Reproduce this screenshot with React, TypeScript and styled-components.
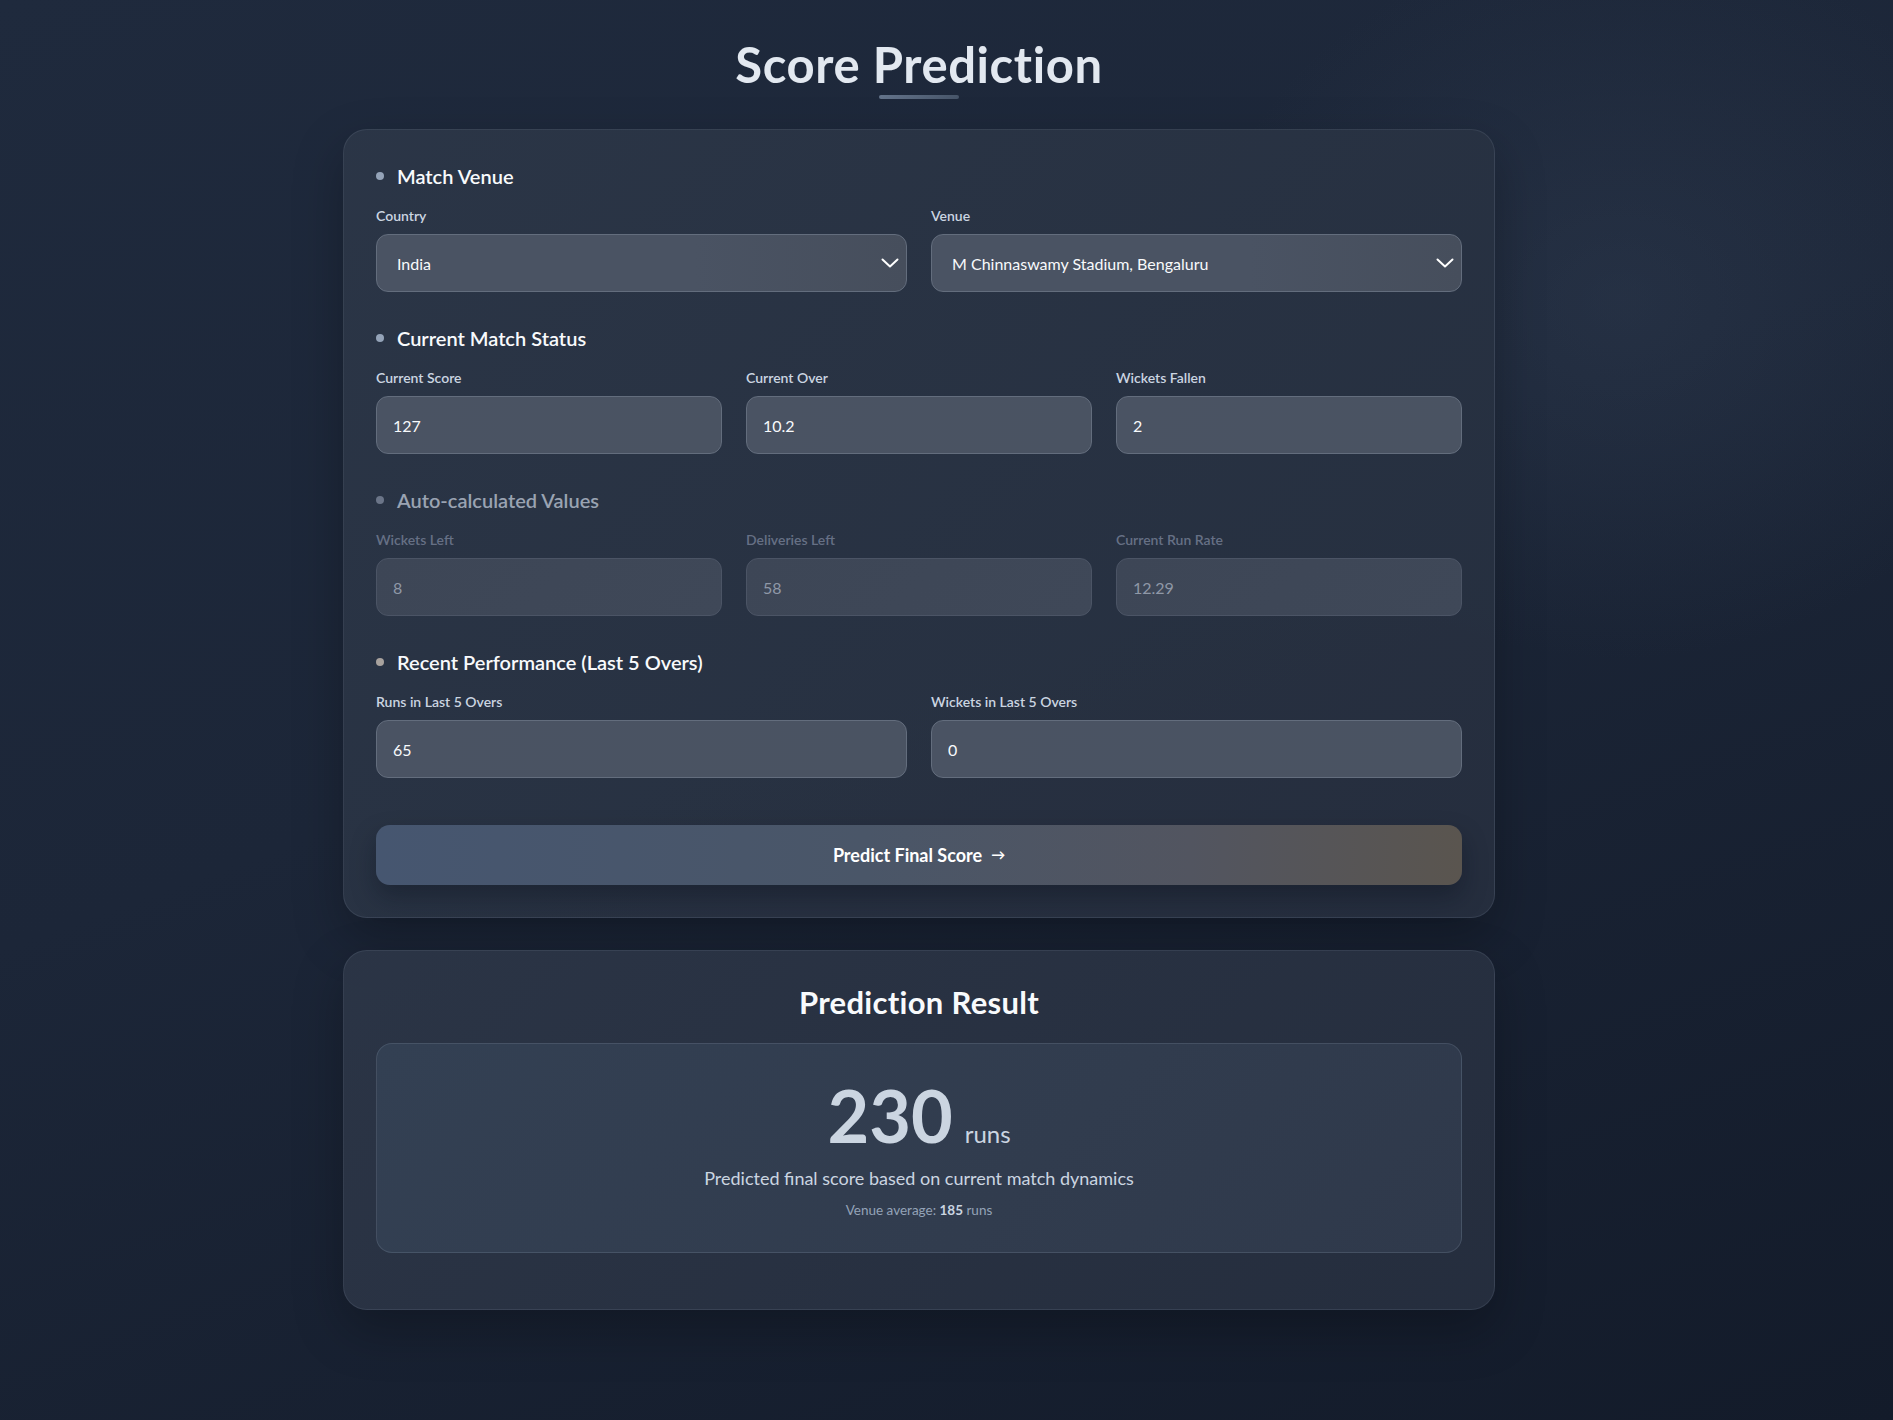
import React from "react";
import styled, { createGlobalStyle } from "styled-components";

const GlobalStyle = createGlobalStyle`
  html, body {
    margin: 0;
    padding: 0;
  }
  body {
    min-height: 1420px;
    font-family: Lato, "Open Sans", "Noto Sans", sans-serif;
    color: #f1f5f9;
    background:
      radial-gradient(ellipse 560px 480px at 1620px 300px, rgba(56, 70, 92, 0.32), rgba(56, 70, 92, 0) 75%),
      linear-gradient(160deg, #1f2a3d 0%, #1c2638 45%, #131b2a 100%);
  }
  * { box-sizing: border-box; }
`;

const Page = styled.main`
  min-height: 1420px;
  padding: 35px 55px 80px 0;
  display: flex;
  flex-direction: column;
  align-items: center;
`;

const PageTitle = styled.h1`
  margin: 0;
  font-size: 49px;
  line-height: 58px;
  font-weight: 700;
  color: #e2e8f0;
  letter-spacing: 0.6px;
`;

const TitleBar = styled.div`
  width: 80px;
  height: 4px;
  margin-top: 2px;
  border-radius: 2px;
  background: linear-gradient(90deg, #64748b, #475569);
`;

const Card = styled.section<{ $mt: number }>`
  width: 1152px;
  margin-top: ${(p) => p.$mt}px;
  padding: 32px;
  border-radius: 24px;
  border: 1px solid rgba(148, 163, 184, 0.14);
  background: linear-gradient(135deg, rgba(44, 54, 71, 0.95) 0%, rgba(38, 47, 63, 0.95) 100%);
  box-shadow: 0 20px 50px rgba(0, 0, 0, 0.25);
  display: flex;
  flex-direction: column;
`;

const Sections = styled.div`
  display: flex;
  flex-direction: column;
  gap: 32px;
`;

const SectionTitle = styled.h2<{ $muted?: boolean; $dot: string }>`
  margin: -1px 0 15px 0;
  display: flex;
  align-items: center;
  gap: 13px;
  font-size: 20px;
  line-height: 30px;
  font-weight: 600;
  color: ${(p) => (p.$muted ? "#9aa3b2" : "#f8fafc")};

  &::before {
    content: "";
    width: 8px;
    height: 8px;
    border-radius: 50%;
    background: ${(p) => p.$dot};
    flex: none;
  }
`;

const Grid = styled.div<{ $cols: number }>`
  display: grid;
  grid-template-columns: repeat(${(p) => p.$cols}, 1fr);
  gap: 24px;
`;

const Field = styled.label`
  display: flex;
  flex-direction: column;
`;

const Label = styled.span<{ $muted?: boolean }>`
  font-size: 14px;
  line-height: 20px;
  font-weight: 600;
  margin-bottom: 8px;
  color: ${(p) => (p.$muted ? "#667085" : "#cbd5e1")};
`;

const Input = styled.input<{ $muted?: boolean }>`
  height: 58px;
  width: 100%;
  padding: 0 16px;
  border-radius: 12px;
  font-family: inherit;
  font-size: 16px;
  outline: none;
  border: 1px solid ${(p) => (p.$muted ? "#4b5465" : "#636d7d")};
  background: ${(p) =>
    p.$muted
      ? "linear-gradient(135deg, #3d4656, #3f4858)"
      : "linear-gradient(135deg, #4a5363, #4a5362)"};
  color: ${(p) => (p.$muted ? "#8f98a7" : "#f8fafc")};
`;

const SelectWrap = styled.div`
  position: relative;
`;

const Select = styled.select`
  appearance: none;
  height: 58px;
  width: 100%;
  padding: 0 44px 0 20px;
  border-radius: 12px;
  font-family: inherit;
  font-size: 16px;
  outline: none;
  border: 1px solid #636d7d;
  background: linear-gradient(90deg, #4a5363 0%, #4a5363 60%, #464e5c 100%);
  color: #f8fafc;
`;

const Chevron = styled.svg`
  position: absolute;
  right: 8px;
  top: 50%;
  transform: translateY(-50%);
  pointer-events: none;
`;

const PredictButton = styled.button`
  margin-top: 47px;
  height: 60px;
  width: 100%;
  border: none;
  border-radius: 14px;
  font-family: inherit;
  font-size: 18px;
  font-weight: 700;
  color: #ffffff;
  background: linear-gradient(90deg, #465670 0%, #4a5668 45%, #525560 75%, #5a554f 100%);
  box-shadow: 0 12px 24px rgba(10, 15, 25, 0.35);
  display: flex;
  align-items: center;
  justify-content: center;
  gap: 9px;
  cursor: pointer;
`;

const Arrow = styled.span`
  font-size: 14px;
  line-height: 1;
`;

const ResultTitle = styled.h2`
  margin: 0 0 22px 0;
  text-align: center;
  font-size: 31px;
  line-height: 38px;
  font-weight: 700;
  letter-spacing: 0.3px;
  color: #f8fafc;
`;

const ResultBox = styled.div`
  padding: 35px 24px 31px;
  border-radius: 16px;
  border: 1px solid rgba(148, 163, 184, 0.2);
  background: linear-gradient(135deg, #334053 0%, #313c4e 60%, #2f394b 100%);
  display: flex;
  flex-direction: column;
  align-items: center;
  margin-bottom: 24px;
`;

const ScoreLine = styled.div`
  display: flex;
  align-items: baseline;
  gap: 12px;
`;

const ScoreValue = styled.span`
  font-size: 72px;
  line-height: 1;
  font-weight: 700;
  color: #cbd5e1;
`;

const ScoreUnit = styled.span`
  font-size: 24px;
  color: #cbd5e1;
`;

const ResultText = styled.p`
  margin: 14px 0 0 0;
  font-size: 18px;
  line-height: 27px;
  color: #cbd5e1;
`;

const VenueAvg = styled.p`
  margin: 9px 0 0 0;
  font-size: 13.5px;
  line-height: 19.5px;
  color: #94a3b8;

  strong {
    color: #cbd5e1;
    font-weight: 700;
  }
`;

const ChevronIcon = () => (
  <Chevron width="18" height="10" viewBox="0 0 18 10" fill="none">
    <path d="M1.5 1.5 L9 8.5 L16.5 1.5" stroke="#ffffff" strokeWidth="2" strokeLinecap="round" strokeLinejoin="round" />
  </Chevron>
);

export default function App() {
  return (
    <>
      <GlobalStyle />
      <Page>
        <PageTitle>Score Prediction</PageTitle>
        <TitleBar />

        <Card $mt={30}>
          <Sections>
            <div>
              <SectionTitle $dot="#94a3b8">Match Venue</SectionTitle>
              <Grid $cols={2}>
                <Field>
                  <Label>Country</Label>
                  <SelectWrap>
                    <Select defaultValue="India">
                      <option>India</option>
                    </Select>
                    <ChevronIcon />
                  </SelectWrap>
                </Field>
                <Field>
                  <Label>Venue</Label>
                  <SelectWrap>
                    <Select defaultValue="M Chinnaswamy Stadium, Bengaluru">
                      <option>M Chinnaswamy Stadium, Bengaluru</option>
                    </Select>
                    <ChevronIcon />
                  </SelectWrap>
                </Field>
              </Grid>
            </div>

            <div>
              <SectionTitle $dot="#94a3b8">Current Match Status</SectionTitle>
              <Grid $cols={3}>
                <Field>
                  <Label>Current Score</Label>
                  <Input defaultValue="127" />
                </Field>
                <Field>
                  <Label>Current Over</Label>
                  <Input defaultValue="10.2" />
                </Field>
                <Field>
                  <Label>Wickets Fallen</Label>
                  <Input defaultValue="2" />
                </Field>
              </Grid>
            </div>

            <div>
              <SectionTitle $muted $dot="#6b7588">Auto-calculated Values</SectionTitle>
              <Grid $cols={3}>
                <Field>
                  <Label $muted>Wickets Left</Label>
                  <Input $muted readOnly value="8" />
                </Field>
                <Field>
                  <Label $muted>Deliveries Left</Label>
                  <Input $muted readOnly value="58" />
                </Field>
                <Field>
                  <Label $muted>Current Run Rate</Label>
                  <Input $muted readOnly value="12.29" />
                </Field>
              </Grid>
            </div>

            <div>
              <SectionTitle $dot="#a8a29e">Recent Performance (Last 5 Overs)</SectionTitle>
              <Grid $cols={2}>
                <Field>
                  <Label>Runs in Last 5 Overs</Label>
                  <Input defaultValue="65" />
                </Field>
                <Field>
                  <Label>Wickets in Last 5 Overs</Label>
                  <Input defaultValue="0" />
                </Field>
              </Grid>
            </div>
          </Sections>

          <PredictButton type="button">
            <span>Predict Final Score</span>
            <Arrow>→</Arrow>
          </PredictButton>
        </Card>

        <Card $mt={32}>
          <ResultTitle>Prediction Result</ResultTitle>
          <ResultBox>
            <ScoreLine>
              <ScoreValue>230</ScoreValue>
              <ScoreUnit>runs</ScoreUnit>
            </ScoreLine>
            <ResultText>Predicted final score based on current match dynamics</ResultText>
            <VenueAvg>
              Venue average: <strong>185</strong> runs
            </VenueAvg>
          </ResultBox>
        </Card>
      </Page>
    </>
  );
}
